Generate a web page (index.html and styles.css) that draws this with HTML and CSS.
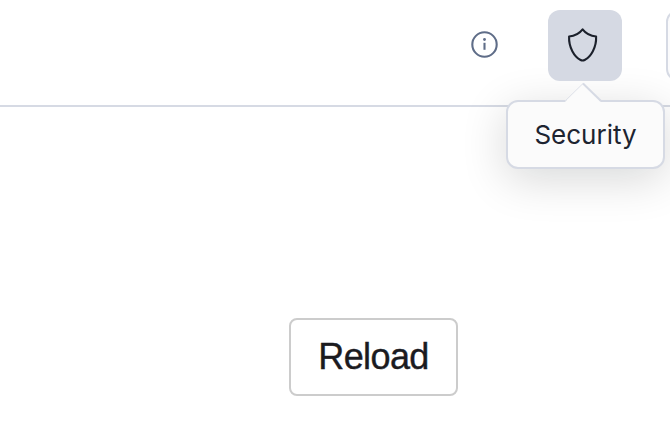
FILE: index.html
```html
<!DOCTYPE html>
<html lang="en">
<head>
<meta charset="utf-8">
<title>Security</title>
<link rel="stylesheet" href="styles.css">
</head>
<body>
<header class="toolbar">
  <svg class="info" viewBox="0 0 28 28" aria-hidden="true">
    <circle cx="13.5" cy="13.5" r="12.2"/>
    <path d="M13.5 11.8V18.8"/>
    <circle class="dot" cx="13.5" cy="8.5" r="1.4"/>
  </svg>
  <div class="anchor">
    <button class="tool active" aria-label="Security">
      <svg class="shield" viewBox="0 0 32 36" aria-hidden="true">
        <path d="M15.6 2.3C18.6 6.2 23.2 8.9 29.1 9.5C29.6 20.5 23.8 29.8 17.6 33Q15.6 34 13.6 33C7.4 29.8 1.6 20.5 2.1 9.5C8 8.9 12.6 6.2 15.6 2.3Z"/>
      </svg>
    </button>
    <div class="tooltip" role="tooltip">
      <svg class="arrow" viewBox="0 0 40 21" aria-hidden="true">
        <path class="fill" d="M0 21L19 1.5L38 21Z"/>
        <path class="left" d="M1 19L19 1.5"/>
        <path class="right" d="M19 1.5L37 19"/>
      </svg>
      Security
    </div>
  </div>
  <div class="overflow">
    <button class="tool next" aria-label="More"></button>
  </div>
</header>
<main class="content">
  <button class="reload">Reload</button>
</main>
</body>
</html>
```
FILE: styles.css
```css
* {
  box-sizing: border-box;
}

body {
  margin: 0;
  height: 434px;
  overflow: hidden;
  background: #fff;
  color: #1d2430;
}

.toolbar {
  display: flex;
  align-items: flex-start;
  height: 107px;
  padding: 10px 0 0 471px;
  border-bottom: 2px solid #d6dae4;
}

.info {
  flex: none;
  width: 28px;
  height: 28px;
  margin: 21px 49px 0 0;
  fill: none;
  stroke: #5f6d88;
  stroke-width: 2.1;
}

.info .dot {
  fill: #5f6d88;
  stroke: none;
}

.anchor {
  position: relative;
  flex: none;
  margin-right: 44px;
}

.overflow {
  flex: 1;
  min-width: 0;
  overflow: hidden;
}

.tool {
  display: flex;
  flex: none;
  align-items: center;
  justify-content: center;
  width: 74px;
  height: 71px;
  padding: 0;
  border: 0;
  border-radius: 12px;
}

.active {
  position: relative;
  z-index: 2;
  padding-right: 4px;
  background: #d5d9e3;
}

.next {
  border: 2px solid #d6dae4;
  background: #fbfbfc;
}

.shield {
  width: 32px;
  height: 36px;
  margin-top: -2px;
  fill: none;
  stroke: #1b202b;
  stroke-width: 2.1;
  stroke-linejoin: round;
}

.tooltip {
  position: absolute;
  z-index: 1;
  top: 90px;
  left: -42px;
  width: 159px;
  height: 69px;
  border: 2px solid #d6dae4;
  border-radius: 12px;
  background: #fbfbfb;
  box-shadow: 0 10px 46px rgba(0, 10, 10, 0.16);
  color: #1d2430;
  font: 26px/65px Inter, sans-serif;
  text-align: center;
}

.arrow {
  position: absolute;
  top: -20px;
  left: 56px;
  width: 40px;
  height: 21px;
  fill: none;
}

.arrow .fill {
  fill: #fbfbfb;
}

.arrow .left {
  stroke: #dfe2ea;
  stroke-width: 1;
}

.arrow .right {
  stroke: #d6dae4;
  stroke-width: 2;
}

.content {
  padding: 211px 0 0 289px;
}

.reload {
  width: 169px;
  height: 78px;
  padding: 0;
  border: 2px solid #ccc;
  border-radius: 8px;
  background: #fff;
  color: #1b1b1f;
  font: 36px/74px "Liberation Sans", sans-serif;
  letter-spacing: -0.6px;
  -webkit-text-stroke: 0.4px #1b1b1f;
}
```
